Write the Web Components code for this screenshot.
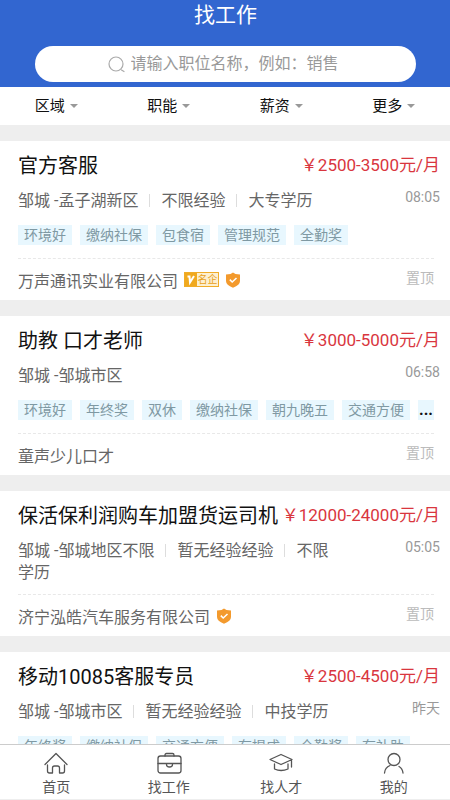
<!DOCTYPE html>
<html lang="zh-CN">
<head>
<meta charset="utf-8">
<meta name="viewport" content="width=device-width, initial-scale=1">
<title>找工作</title>
<style>
  html, body { margin: 0; height: 100%; }
  body {
    font-family: Roboto, "Noto Sans CJK SC", sans-serif;
    color: #111;
    --blue: #3266d0;
    --gap: #eeeeee;
    --muted: #666;
    --faint: #999;
    --red: #d9363e;
  }
</style>
</head>
<body>
<app-shell>
  <app-header slot="top" heading="找工作">
    <search-box placeholder="请输入职位名称，例如：销售"></search-box>
  </app-header>
  <filter-bar slot="top">
    <filter-item>区域</filter-item>
    <filter-item>职能</filter-item>
    <filter-item>薪资</filter-item>
    <filter-item>更多</filter-item>
  </filter-bar>

  <job-card salary="￥2500-3500元/月" time="08:05" note="置顶">
    <span slot="title">官方客服</span>
    <job-facts place="邹城 -孟子湖新区" experience="不限经验" degree="大专"></job-facts>
    <job-tag slot="tags">环境好</job-tag>
    <job-tag slot="tags">缴纳社保</job-tag>
    <job-tag slot="tags">包食宿</job-tag>
    <job-tag slot="tags">管理规范</job-tag>
    <job-tag slot="tags">全勤奖</job-tag>
    <span slot="company">万声通讯实业有限公司</span>
    <famous-badge slot="company"></famous-badge>
    <verified-badge slot="company"></verified-badge>
  </job-card>

  <job-card salary="￥3000-5000元/月" time="06:58" note="置顶">
    <span slot="title">助教 口才老师</span>
    <job-facts place="邹城 -邹城市区"></job-facts>
    <job-tag slot="tags">环境好</job-tag>
    <job-tag slot="tags">年终奖</job-tag>
    <job-tag slot="tags">双休</job-tag>
    <job-tag slot="tags">缴纳社保</job-tag>
    <job-tag slot="tags">朝九晚五</job-tag>
    <job-tag slot="tags">交通方便</job-tag>
    <job-tag slot="tags" more>...</job-tag>
    <span slot="company">童声少儿口才</span>
  </job-card>

  <job-card salary="￥12000-24000元/月" time="05:05" note="置顶">
    <span slot="title">保活保利润购车加盟货运司机</span>
    <job-facts place="邹城 -邹城地区不限" experience="暂无经验经验" degree="不限"></job-facts>
    <span slot="company">济宁泓皓汽车服务有限公司</span>
    <verified-badge slot="company"></verified-badge>
  </job-card>

  <job-card salary="￥2500-4500元/月" time="昨天">
    <span slot="title">移动10085客服专员</span>
    <job-facts place="邹城 -邹城市区" experience="暂无经验经验" degree="中技"></job-facts>
    <job-tag slot="tags">年终奖</job-tag>
    <job-tag slot="tags">缴纳社保</job-tag>
    <job-tag slot="tags">交通方便</job-tag>
    <job-tag slot="tags">有提成</job-tag>
    <job-tag slot="tags">全勤奖</job-tag>
    <job-tag slot="tags">有补助</job-tag>
  </job-card>

  <tab-bar slot="bottom">
    <tab-item label="首页" href="#home">
      <svg width="26" height="24" viewBox="0 0 26 24" fill="none" stroke="#555" stroke-width="1.3" stroke-linejoin="round" stroke-linecap="round"><path d="M2 13.5 13 2.5l11 11M4.500 14v6q0 2 2 2h3v-5q0-2 2-2h3q2 0 2 2v5h3q2 0 2-2v-6"/></svg>
    </tab-item>
    <tab-item label="找工作" href="#jobs">
      <svg width="26" height="24" viewBox="0 0 26 24" fill="none" stroke="#555" stroke-width="1.3" stroke-linejoin="round" stroke-linecap="round"><rect x="2" y="5" width="23" height="17" rx="2.500"/><path d="M9 5V4q0-1.500 1.500-1.500h6Q18 2.500 18 4v1M2 12.500h8.500M16.500 12.500H25M10.500 12.500h6v1a3 2.500 0 0 1-6 0z"/></svg>
    </tab-item>
    <tab-item label="找人才" href="#talent">
      <svg width="26" height="24" viewBox="0 0 26 24" fill="none" stroke="#555" stroke-width="1.3" stroke-linejoin="round" stroke-linecap="round"><path d="M2 8.500 13 3.500l11 5-11 5zM6.500 13v5q6.500 3 13.500 0v-5M23.500 9v7"/></svg>
    </tab-item>
    <tab-item label="我的" href="#me">
      <svg width="26" height="24" viewBox="0 0 26 24" fill="none" stroke="#555" stroke-width="1.3" stroke-linejoin="round" stroke-linecap="round"><circle cx="13" cy="8.500" r="6"/><path d="M3.500 22q.5-5.500 5.500-7.500M18 15.500q3.500 2 4 6.500"/></svg>
    </tab-item>
  </tab-bar>
</app-shell>

<script>
  const define = (name, html, setup) => {
    const template = document.createElement('template');
    template.innerHTML = html;
    customElements.define(name, class extends HTMLElement {
      constructor() {
        super();
        this.attachShadow({ mode: 'open' }).append(template.content.cloneNode(true));
      }
      connectedCallback() {
        if (setup) setup(this, this.shadowRoot);
      }
    });
  };

  define('app-shell', `
    <style>
      :host { display: flex; flex-direction: column; height: 100vh; background: var(--gap); }
      main { flex: 1; min-height: 0; overflow-y: auto; scrollbar-width: none;
        display: flex; flex-direction: column; gap: 16px; padding-top: 16px; }
    </style>
    <slot name="top"></slot>
    <main><slot></slot></main>
    <slot name="bottom"></slot>`);

  define('app-header', `
    <style>
      :host { display: block; background: var(--blue); padding: 0 34px 5px 35px; }
      h1 { margin: 0 0 16px; color: #fff; font-size: 21px; font-weight: 400; line-height: 30px; text-align: center; }
    </style>
    <h1></h1>
    <slot></slot>`,
    (el, root) => { root.querySelector('h1').textContent = el.getAttribute('heading'); });

  define('search-box', `
    <style>
      :host { display: block; }
      label { display: flex; align-items: center; justify-content: center; gap: 6px;
        height: 36px; border-radius: 18px; background: #fff; }
      svg { flex: none; }
      input { width: 213px; padding: 0; border: 0; outline: 0; background: none;
        font: inherit; font-size: 16px; line-height: 24px; color: #333; }
      input::placeholder { color: #999; opacity: 1; }
    </style>
    <label>
      <svg width="17" height="17" viewBox="0 0 17 17" fill="none" stroke="#aaa" stroke-width="1.2" stroke-linecap="round" aria-hidden="true"><circle cx="8" cy="8" r="7"/><path d="m13.500 14 2.500 1.500"/></svg>
      <input type="text">
    </label>`,
    (el, root) => {
      const input = root.querySelector('input');
      input.placeholder = el.getAttribute('placeholder');
      input.setAttribute('aria-label', input.placeholder);
    });

  define('filter-bar', `
    <style>
      :host { display: grid; grid-template-columns: repeat(4, 1fr); height: 38px; background: #fff; }
    </style>
    <slot></slot>`);

  define('filter-item', `
    <style>
      :host { display: flex; }
      button { flex: 1; display: flex; align-items: center; justify-content: center; gap: 5px;
        padding: 0; border: 0; background: none; font: inherit; font-size: 15px; line-height: 22px; color: #111; }
      i { border: 4px solid transparent; border-top-color: #999; border-bottom: 0; }
    </style>
    <button type="button"><slot></slot><i></i></button>`);

  define('job-card', `
    <style>
      :host { display: block; flex: none; background: #fff; padding: 10px 10px 0 18px; }
      .head { display: flex; justify-content: space-between; align-items: center; white-space: nowrap; }
      h2 { margin: 0; font-size: 20px; font-weight: 400; line-height: 30px; }
      .salary { color: var(--red); font-size: 17px; line-height: 26px; padding-bottom: 2px; }
      .info { display: flex; justify-content: space-between; margin-top: 9px; }
      .facts { flex: 1; font-size: 16px; line-height: 22px; color: var(--muted); }
      time { flex: 0 0 102px; text-align: right; font-size: 14px; line-height: 14px; color: var(--faint); }
      .tags { display: flex; gap: 8px; margin-right: 6px; padding: 13px 0 3px; }
      .tags[hidden] { display: none; }
      .foot { display: flex; align-items: center; justify-content: space-between;
        margin: 10px 6px 0 0; border-top: 1px dashed #e8e8e8; height: 41px; }
      .company { display: flex; align-items: center; gap: 6px; font-size: 16px; color: var(--muted); }
      .note { font-size: 14px; line-height: 20px; padding-bottom: 4px; color: #bbb; }
    </style>
    <div class="head"><h2><slot name="title"></slot></h2><span class="salary"></span></div>
    <div class="info"><div class="facts"><slot></slot></div><time></time></div>
    <div class="tags"><slot name="tags"></slot></div>
    <div class="foot"><div class="company"><slot name="company"></slot></div><span class="note"></span></div>`,
    (el, root) => {
      root.querySelector('.salary').textContent = el.getAttribute('salary');
      root.querySelector('time').textContent = el.getAttribute('time');
      root.querySelector('.note').textContent = el.getAttribute('note') || '';
      root.querySelector('.tags').hidden = !el.querySelector('[slot="tags"]');
    });

  define('job-facts', `
    <style>
      :host { display: inline; }
      i { display: inline-block; width: 1px; height: 13px; margin: 0 11px; background: #ddd; vertical-align: -1px; }
    </style>
    <span></span>`,
    (el, root) => {
      const box = root.querySelector('span');
      const add = text => {
        const part = document.createElement('span');
        part.textContent = text;
        box.append(part);
      };
      ['place', 'experience', 'degree'].filter(key => el.hasAttribute(key)).forEach((key, n) => {
        if (n) box.append(document.createElement('i'));
        add(el.getAttribute(key));
        if (key === 'degree') add('学历');
      });
    });

  define('job-tag', `
    <style>
      :host { display: block; flex: none; padding: 0 6px; background: #e8f7fe; color: #7f99a3;
        font-size: 14px; line-height: 20px; white-space: nowrap; }
      :host([more]) { flex: 1; padding: 0; color: #111; font-weight: 700; font-size: 16px; text-align: center; }
    </style>
    <slot></slot>`);

  define('famous-badge', `
    <style>
      :host { display: flex; box-sizing: border-box; width: 35px; height: 15px; border: 1px solid #f0ac28; background: #fdf0d0; }
      svg { flex: none; background: #f0a91e; }
      span { flex: 1; font-size: 10px; line-height: 13px; color: #e8a020; text-align: center; white-space: nowrap; }
    </style>
    <svg width="12" height="13" viewBox="0 0 12 13" fill="none" stroke="#fff" stroke-width="2" aria-hidden="true"><path d="M2.500 3.500H4.500L5 9.500 9 3"/></svg>
    <span>名企</span>`);

  define('verified-badge', `
    <style>
      :host { display: block; height: 16px; }
      svg { display: block; }
    </style>
    <svg width="16" height="16" viewBox="0 0 16 16" role="img" aria-label="已认证"><path d="M8 .5 10.500 2 15 2.500V9q0 4-7 6.700Q1 13 1 9V2.500L5.500 2z" fill="#f39a2d"/><path d="m4.800 7.600 2.400 2.400 4.300-4" fill="none" stroke="#fff" stroke-width="1.500"/></svg>`);

  define('tab-bar', `
    <style>
      :host { display: block; flex: none; border-top: 1px solid #ccc; background: #fff; }
      nav { display: grid; grid-template-columns: repeat(4, 1fr); height: 54px; border-bottom: 1px solid #eee; }
    </style>
    <nav><slot></slot></nav>`);

  define('tab-item', `
    <style>
      :host { display: block; }
      a { display: flex; flex-direction: column; align-items: center; gap: 2px; padding-top: 6px;
        color: #555; text-decoration: none; font-size: 14px; line-height: 20px; }
      ::slotted(svg) { display: block; }
    </style>
    <a><slot></slot><span></span></a>`,
    (el, root) => {
      root.querySelector('a').href = el.getAttribute('href');
      root.querySelector('span').textContent = el.getAttribute('label');
    });
</script>
</body>
</html>
